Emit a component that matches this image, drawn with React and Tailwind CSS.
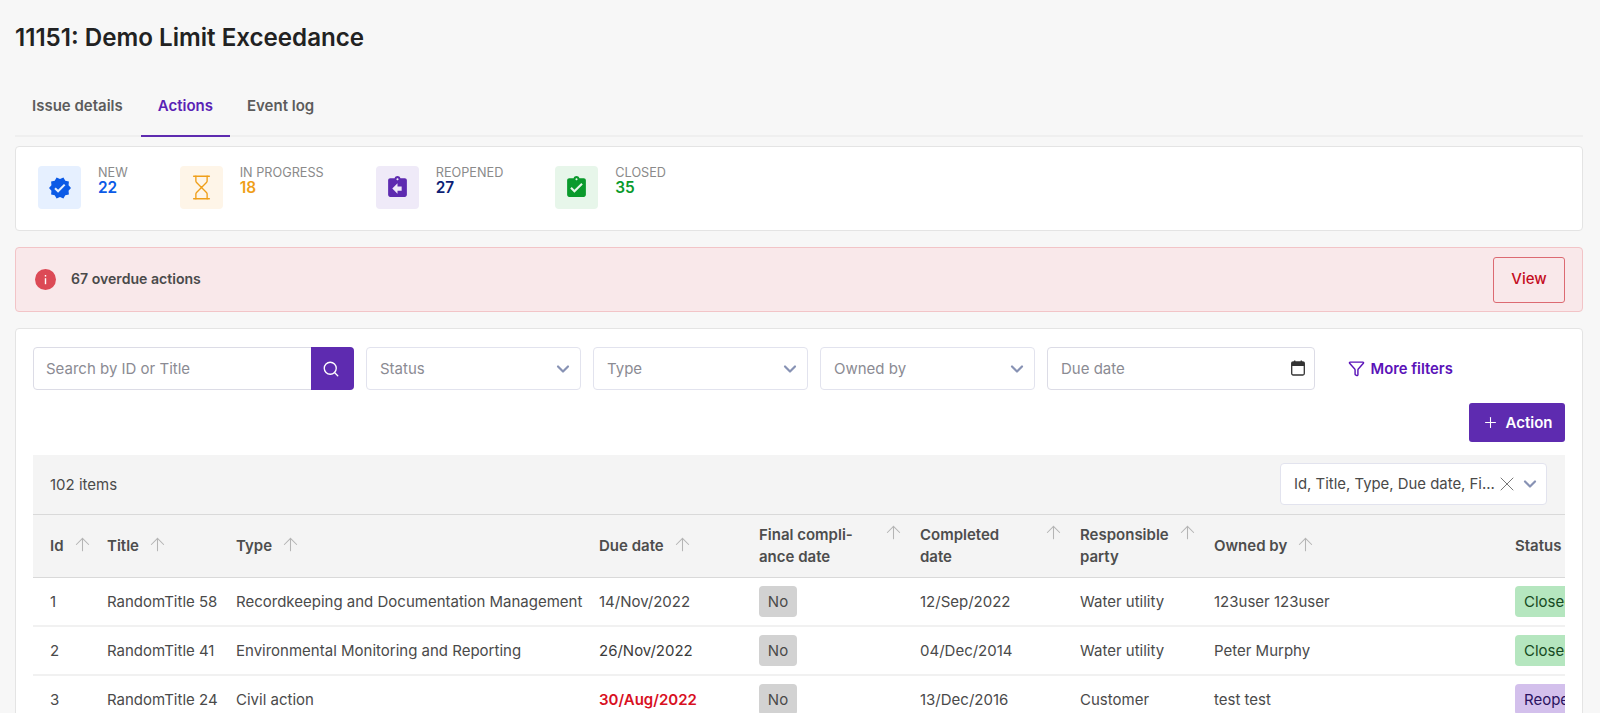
import React from "react";
import { ArrowUp, ChevronDown, Funnel, Hourglass, Plus, Search, X } from "lucide-react";
import { MdVerified, MdAssignmentReturn, MdAssignmentTurnedIn } from "react-icons/md";

const stats = [
  { label: "NEW", value: "22", box: "bg-[#e6f0ff]", num: "text-[#0b5ae6]", icon: <MdVerified size={24} className="text-[#0b5ae6]" /> },
  { label: "IN PROGRESS", value: "18", box: "bg-[#fef5e8]", num: "text-[#ef9f1a]", icon: <Hourglass size={27} strokeWidth={1.2} className="text-[#ef9f1a]" /> },
  { label: "REOPENED", value: "27", box: "bg-[#efeaf8]", num: "text-[#0d1f75]", icon: <MdAssignmentReturn size={25} className="text-[#5e2bb0]" /> },
  { label: "CLOSED", value: "35", box: "bg-[#e7f6ea]", num: "text-[#0a9a2c]", icon: <MdAssignmentTurnedIn size={25} className="text-[#0a9a2c]" /> },
];

function SelectBox({ label }) {
  return (
    <div className="flex h-[43px] w-[214.5px] items-center justify-between rounded-[4px] border border-[#e2e3ee] bg-white pl-[13px] pr-[7px] text-[#8b8b93]">
      <span className="pt-[1.5px]">{label}</span>
      <ChevronDown size={20} strokeWidth={2.6} className="text-[#8792b4]" />
    </div>
  );
}

function Head({ children, sortTop }) {
  return (
    <th className="h-[62px] pl-[17px] pr-0 text-left align-middle font-semibold text-[#4d4d4d]">
      {sortTop ? (
        <div className="flex items-start justify-between">
          <span className="leading-[22px]">{children}</span>
          <ArrowUp size={21} strokeWidth={1.2} className="-mt-[2px] -mr-[1px] shrink-0 text-[#b5b5b5]" />
        </div>
      ) : (
        <div className="flex items-center gap-[8px]">
          <span>{children}</span>
          {children !== "Status" && <ArrowUp size={21} strokeWidth={1.2} className="-mt-[5px] -mb-[3px] shrink-0 text-[#b5b5b5]" />}
        </div>
      )}
    </th>
  );
}

const rows = [
  ["1", "RandomTitle 58", "Recordkeeping and Documentation Management", "14/Nov/2022", "12/Sep/2022", "Water utility", "123user 123user", "Closed", "text-[#4a4a4a]"],
  ["2", "RandomTitle 41", "Environmental Monitoring and Reporting", "26/Nov/2022", "04/Dec/2014", "Water utility", "Peter Murphy", "Closed", "text-[#3c3c3c]"],
  ["3", "RandomTitle 24", "Civil action", "30/Aug/2022", "13/Dec/2016", "Customer", "test test", "Reopened", "font-semibold text-[#d8101f]"],
];

export default function App() {
  return (
    <div className="h-[713px] overflow-hidden bg-[#f7f7f7] pl-[15px] pr-[17px] text-[15px] text-[#4a4a4a] [font-family:Inter,sans-serif]">
      <h1 className="pt-[22px] text-[24.15px] leading-[32px] font-semibold text-[#222222]">11151: Demo Limit Exceedance</h1>

      <div className="mt-[21px] flex h-[62px] border-b-2 border-[#efefef] text-[15px] font-semibold text-[#5c5c5c]">
        <div className="-mb-[2px] flex h-[62px] items-center border-b-2 border-transparent pl-[17px] pr-[18px] pt-[3px]">Issue details</div>
        <div className="-mb-[2px] flex h-[62px] items-center border-b-2 border-[#5e2bb0] px-[17px] pt-[3px] text-[#5a22b5]">Actions</div>
        <div className="-mb-[2px] flex h-[62px] items-center border-b-2 border-transparent px-[17px] pt-[3px]">Event log</div>
      </div>

      <div className="mt-[9px] flex h-[85px] gap-[52px] rounded-[4px] border border-[#e4e4e4] bg-white pl-[22px] pt-[19px]">
        {stats.map((s) => (
          <div key={s.label} className="flex gap-[17px]">
            <div className={`flex h-[43px] w-[43px] items-center justify-center rounded-[4px] ${s.box}`}>{s.icon}</div>
            <div className="-mt-[1px] text-[12.7px] leading-[15px]">
              <div className="text-[#8a8a8a]">{s.label}</div>
              <div className={`text-[15.4px] font-semibold ${s.num}`}>{s.value}</div>
            </div>
          </div>
        ))}
      </div>

      <div className="mt-[16px] flex h-[65px] items-center justify-between rounded-[4px] border border-[#f2c4c7] bg-[#f9e8ea] pl-[19px] pr-[17px]">
        <div className="flex items-center gap-[15px]">
          <svg width="21" height="21" viewBox="0 0 21 21"><circle cx="10.5" cy="10.5" r="10.5" fill="#dc4a56" /><rect x="9.8" y="9.2" width="1.4" height="6" fill="#fff" /><rect x="9.8" y="6" width="1.4" height="1.6" fill="#fff" /></svg>
          <span className="pb-[1px] text-[14.1px] font-semibold text-[#4a4a4a]">67 overdue actions</span>
        </div>
        <button className="flex h-[46px] w-[72px] items-center justify-center rounded-[3px] border border-[#dc6a72] font-medium text-[#c40d1e]">View</button>
      </div>

      <div className="mt-[16px] rounded-[4px] border border-[#e4e4e4] bg-white px-[17px] pt-[18px] pb-[40px]">
        <div className="flex items-center">
          <div className="flex h-[43px] w-[321px] rounded-[4px] border border-[#dcdce6]">
            <div className="flex flex-1 items-center pl-[12px] pt-[1.5px] text-[#8b8b93]">Search by ID or Title</div>
            <div className="-m-px flex w-[43px] items-center justify-center rounded-r-[4px] bg-[#5e2bb0] pr-[4px]"><Search size={18} strokeWidth={1.8} className="text-white" /></div>
          </div>
          <div className="ml-[12px] flex gap-[12.5px]">
            <SelectBox label="Status" />
            <SelectBox label="Type" />
            <SelectBox label="Owned by" />
          </div>
          <div className="ml-[12.5px] flex h-[43px] w-[267.5px] items-center justify-between rounded-[4px] border border-[#dcdce6] pl-[13px] pr-[9px] text-[#8b8b93]">
            <span className="pt-[1.5px]">Due date</span>
            <svg width="14" height="16" viewBox="0 0 14 16" className="-mt-[2px]"><rect x="0.7" y="2" width="12.6" height="13" rx="1.5" fill="none" stroke="#333" strokeWidth="1.3" /><rect x="0.7" y="2" width="12.6" height="4" fill="#333" /><rect x="3" y="0.5" width="1.4" height="2" fill="#333" /><rect x="9.6" y="0.5" width="1.4" height="2" fill="#333" /></svg>
          </div>
          <div className="ml-[33px] flex items-center gap-[6px] font-semibold text-[#5a12b8]">
            <Funnel size={17} strokeWidth={2} />
            <span className="pt-[1px] text-[14.8px]">More filters</span>
          </div>
        </div>

        <div className="mt-[13px] flex justify-end">
          <button className="flex h-[39px] w-[96px] items-center justify-center gap-[7px] rounded-[3px] bg-[#5e2bb0] font-semibold text-white">
            <Plus size={17} strokeWidth={1.5} />
            <span className="pt-[1px]">Action</span>
          </button>
        </div>

        <div className="mt-[13px] flex h-[60px] items-center justify-between border-b border-[#d9d9d9] bg-[#f4f4f4] pb-[2px] pl-[17px] pr-[18px]">
          <span className="pt-[3px]">102 items</span>
          <div className="flex h-[42px] w-[267px] items-center rounded-[4px] border border-[#e2e3ee] bg-white pl-[13px] pr-[6px]">
            <span className="flex-1 whitespace-nowrap pt-[1px] text-[14.9px] text-[#4a4a4a]">Id, Title, Type, Due date, Fi...</span>
            <X size={24} strokeWidth={1} className="-mr-[1px] text-[#777]" />
            <ChevronDown size={20} strokeWidth={2.6} className="ml-[2px] text-[#8792b4]" />
          </div>
        </div>

        <div className="overflow-hidden">
          <table className="w-[1700px] table-fixed border-collapse">
            <colgroup>
              <col className="w-[57px]" />
              <col className="w-[129px]" />
              <col className="w-[363px]" />
              <col className="w-[160px]" />
              <col className="w-[161px]" />
              <col className="w-[160px]" />
              <col className="w-[134px]" />
              <col className="w-[301px]" />
              <col className="w-[235px]" />
            </colgroup>
            <thead className="bg-[#f4f4f4]">
              <tr className="border-b border-[#d9d9d9]">
                <Head>Id</Head>
                <Head>Title</Head>
                <Head>Type</Head>
                <Head>Due date</Head>
                <Head sortTop>Final compli-<br />ance date</Head>
                <Head sortTop>Completed<br />date</Head>
                <Head sortTop>Responsible<br />party</Head>
                <Head>Owned by</Head>
                <Head>Status</Head>
              </tr>
            </thead>
            <tbody>
              {rows.map((r) => (
                <tr key={r[0]} className="h-[49px] border-b-2 border-[#f1f1f1]">
                  <td className="pl-[17px] pt-[2px]">{r[0]}</td>
                  <td className="pl-[17px] pt-[2px] whitespace-nowrap">{r[1]}</td>
                  <td className="pl-[17px] pt-[2px] whitespace-nowrap">{r[2]}</td>
                  <td className={`pl-[17px] pt-[2px] ${r[8]}`}>{r[3]}</td>
                  <td className="pl-[17px]"><span className="inline-flex h-[31px] w-[38px] items-center justify-center rounded-[4px] bg-[#d2d2d2] pt-[2px]">No</span></td>
                  <td className="pl-[17px] pt-[2px]">{r[4]}</td>
                  <td className="pl-[17px] pt-[2px]">{r[5]}</td>
                  <td className="pl-[17px] pt-[2px]">{r[6]}</td>
                  <td className="pl-[17px]">
                    <span className={`inline-flex h-[31px] items-center rounded-[4px] px-[9px] pt-[2px] ${r[7] === "Closed" ? "bg-[#b5e6bf] text-[#164a22]" : "bg-[#d3c0ec] text-[#2a1260]"}`}>{r[7]}</span>
                  </td>
                </tr>
              ))}
            </tbody>
          </table>
        </div>
      </div>
    </div>
  );
}
